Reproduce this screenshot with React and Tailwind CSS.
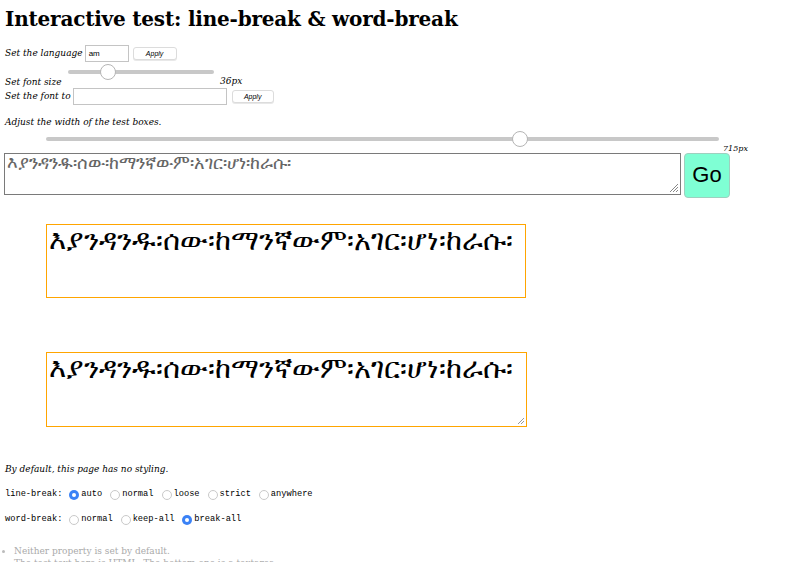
import React from "react";

const AMHARIC = "እያንዳንዱ፡ሰው፡ከማንኛውም፡አገር፡ሆነ፡ከራሱ፡";

const Slider = ({ width, thumb }) => (
  <div className={`relative h-[16px] ${width}`}>
    <div className="absolute left-0 right-0 top-[6px] h-[4px] rounded-full bg-[#c8c8c8]" />
    <div className={`absolute top-0 h-[16px] w-[16px] rounded-full border border-[#b5b5b5] bg-white ${thumb}`} />
  </div>
);

const Radio = ({ checked, label }) => (
  <label className="flex items-center gap-[2px]">
    {checked ? (
      <span className="flex h-[10px] w-[10px] items-center justify-center rounded-full bg-[#3b82f6]">
        <span className="h-[4px] w-[4px] rounded-full bg-white" />
      </span>
    ) : (
      <span className="h-[10px] w-[10px] rounded-full border border-[#c9c9c9] bg-white" />
    )}
    <span>{label}</span>
  </label>
);

const Button = ({ children, className = "" }) => (
  <button
    className={`h-[13px] rounded-[3px] border border-[#dcdcdc] bg-white text-[7px] leading-none text-black shadow-[0_1px_0_#e8e8e8] font-['Liberation_Sans',sans-serif] ${className}`}
  >
    {children}
  </button>
);

export default function App() {
  return (
    <div className="min-h-[562px] bg-white px-[5px] pt-[6px] text-black font-['DejaVu_Serif',serif]">
      {/* Titre */}
      <h1 className="text-[20px] font-bold leading-[26px] tracking-[-0.2px]">
        Interactive test: line-break &amp; word-break
      </h1>

      {/* Réglages */}
      <div className="mt-[13px] flex items-center gap-[2px] text-[9px] italic">
        <span>Set the language</span>
        <div className="flex h-[17px] w-[44px] items-center border border-[#c4c4c4] px-[3px] text-[8px] not-italic font-['Liberation_Sans',sans-serif]">
          am
        </div>
        <Button className="ml-[2px] w-[44px]">Apply</Button>
      </div>

      <div className="mt-[2px] flex items-end text-[9px] italic">
        <span className="mb-[-2px] w-[63px]">Set font size</span>
        <div className="mb-[7px]">
          <Slider width="w-[146px]" thumb="left-[32px]" />
        </div>
        <span className="mb-[-1px] ml-[6px]">36px</span>
      </div>

      <div className="mt-[1px] flex items-center gap-[2px] text-[9px] italic">
        <span>Set the font to</span>
        <div className="h-[17px] w-[154px] border border-[#c4c4c4]" />
        <Button className="ml-[3px] w-[42px]">Apply</Button>
      </div>

      <p className="mt-[11px] text-[9px] italic">Adjust the width of the test boxes.</p>

      <div className="mt-[1px] flex items-end">
        <div className="ml-[41px] mb-[8px]">
          <Slider width="w-[673px]" thumb="left-[466px]" />
        </div>
        <span className="ml-[4px] text-[8px] italic">715px</span>
      </div>

      {/* Zone de saisie */}
      <div className="-ml-[1px] mt-[-2px] flex items-start gap-[3px]">
        <div className="relative h-[42px] w-[677px] overflow-hidden border border-[#7a7a7a] px-[2px] text-[18px] leading-[18px] text-[#666] font-['DejaVu_Sans',sans-serif]">
          {AMHARIC}
          <svg className="absolute bottom-[1px] right-[1px]" width="11" height="11" viewBox="0 0 11 11">
            <path d="M10 2L2 10M10 5L5 10M10 8L8 10" stroke="#888" strokeWidth="1" />
          </svg>
        </div>
        <button className="h-[45px] w-[46px] rounded-[4px] border border-[#9fcfbf] bg-[#7fffd4] text-[22px] leading-none text-black font-['Liberation_Sans',sans-serif]">
          Go
        </button>
      </div>

      {/* Boîtes de test */}
      <div className="ml-[41px] mt-[26px] h-[74px] w-[480px] border border-[#ffa500] px-[2px] text-[29px] leading-[30px] font-['DejaVu_Sans',sans-serif]">
        {AMHARIC}
      </div>

      <div className="relative ml-[41px] mt-[54px] h-[75px] w-[481px] border border-[#ffa500] px-[2px] text-[29px] leading-[30px] font-['DejaVu_Sans',sans-serif]">
        {AMHARIC}
        <svg className="absolute bottom-[1px] right-[1px]" width="9" height="9" viewBox="0 0 9 9">
          <path d="M8 2L2 8M8 5L5 8" stroke="#999" strokeWidth="1" />
        </svg>
      </div>

      <p className="mt-[36px] text-[9px] italic">By default, this page has no styling.</p>

      <div className="mt-[12px] flex items-center text-[8.7px] font-['Liberation_Mono',monospace]">
        <span className="mr-[7px]">line-break:</span>
        <div className="flex items-center gap-[8px]">
          <Radio checked label="auto" />
          <Radio label="normal" />
          <Radio label="loose" />
          <Radio label="strict" />
          <Radio label="anywhere" />
        </div>
      </div>

      <div className="mt-[12px] flex items-center text-[8.7px] font-['Liberation_Mono',monospace]">
        <span className="mr-[7px]">word-break:</span>
        <div className="flex items-center gap-[8px]">
          <Radio label="normal" />
          <Radio label="keep-all" />
          <Radio checked label="break-all" />
        </div>
      </div>

      <ul className="mt-[19px] list-disc pl-[9px] text-[9px] leading-[12px] text-[#aaa] marker:text-[#bbb]">
        <li>Neither property is set by default.</li>
        <li>The test text here is HTML. The bottom one is a textarea.</li>
      </ul>
    </div>
  );
}
